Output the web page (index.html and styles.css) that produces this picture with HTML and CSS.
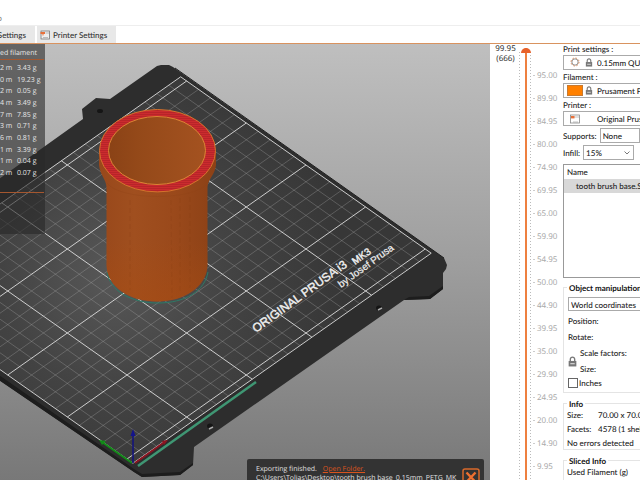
FILE: index.html
```
<!DOCTYPE html>
<html lang="en">
<head>
<meta charset="utf-8">
<title>PrusaSlicer</title>
<link rel="stylesheet" href="styles.css">
</head>
<body>
<header class="menubar"><span>p</span></header>
<nav class="tabs">
  <button class="tab tab-cut" type="button">Settings</button>
  <button class="tab" type="button">
    <svg class="icon" viewBox="0 0 10 10" aria-hidden="true"><rect x="1" y="1" width="8.5" height="8" fill="#eee" stroke="#777" stroke-width=".8"/><path d="M5.500 3H9M3 7.500H8" stroke="#999" stroke-width=".6"/><path d="M.5 2H5V4H3.500V5.500H2.500V4H.5Z" fill="#e8703a"/></svg>
    Printer Settings
  </button>
</nav>
<main class="workspace">
  <section class="viewport">
    <svg class="scene" viewBox="0 44 490 436" preserveAspectRatio="xMinYMin slice" role="img" aria-label="Sliced model on print bed">
      <defs>
        <linearGradient id="sky" x1="0" y1="0" x2="0" y2="1"><stop offset="0" stop-color="#bfbfbf"/><stop offset=".5" stop-color="#9e9e9e"/><stop offset="1" stop-color="#787878"/></linearGradient>
        <radialGradient id="sheet" gradientUnits="userSpaceOnUse" cx="115" cy="275" r="230"><stop offset="0" stop-color="#585858"/><stop offset=".5" stop-color="#434343"/><stop offset="1" stop-color="#373737"/></radialGradient>
        <linearGradient id="body" x1="0" y1="0" x2="1" y2="0"><stop offset="0" stop-color="#98481b"/><stop offset=".3" stop-color="#a04f1f"/><stop offset=".65" stop-color="#9a491b"/><stop offset="1" stop-color="#8c4116"/></linearGradient>
        <linearGradient id="glow" x1="0" y1="0" x2="0" y2="1"><stop offset=".6" stop-color="#a84c12" stop-opacity="0"/><stop offset="1" stop-color="#a84c12" stop-opacity=".5"/></linearGradient>
        <linearGradient id="bore" x1="0" y1="0" x2="1" y2="0"><stop offset="0" stop-color="#8a4216"/><stop offset=".3" stop-color="#944919"/><stop offset="1" stop-color="#a45220"/></linearGradient>
        <pattern id="fill" width="4" height="2" patternUnits="userSpaceOnUse"><rect width="4" height="2" fill="#cb2b2e"/><rect width="4" height="1" fill="#b82429"/></pattern>
      </defs>
      <rect width="1200" height="1200" fill="url(#sky)" y="44" class="sky"/>
      <path d="M-4 181 83 119 82 109 96 98 110 99 157 66 161 65 169 65 173 67 444 258 447 265 446 269 443 273 443 289 430 299 404 300 194 447 193 465 180 475 142 477 134 472 -4 378Z" fill="#2d2d2d"/>
      <path d="M404 300 430 299 443 289V286L429 296 409 297ZM193 463 180 472 142 474 134 469 -4 373V378L134 472 142 477 180 475 193 465Z" fill="#1d1d1d"/>
      <path d="M133 463 -116 288-65 249 181 77 431 253Z" fill="url(#sheet)"/>
      <g transform="matrix(1.193 -.84 -1.193 -.84 127 459)" fill="none">
        <path class="thin" d="M10-5V205M20-5V205M30-5V205M40-5V205M60-5V205M70-5V205M80-5V205M90-5V205M110-5V205M120-5V205M130-5V205M140-5V205M160-5V205M170-5V205M180-5V205M190-5V205M210-5V205M220-5V205M230-5V205M240-5V205M0 10H250M0 20H250M0 30H250M0 40H250M0 60H250M0 70H250M0 80H250M0 90H250M0 110H250M0 120H250M0 130H250M0 140H250M0 160H250M0 170H250M0 180H250M0 190H250"/>
        <path class="bold" d="M0-5H250V205H0ZM50-5V205M100-5V205M150-5V205M200-5V205M0 0H250M0 50H250M0 100H250M0 150H250M0 200H250"/>
      </g>
      <path d="M175 68 444 258" stroke="#1f1f1f" stroke-width="1"/>
      <g fill="#151515"><ellipse cx="100" cy="111" rx="3" ry="2"/><ellipse cx="379" cy="308" rx="3" ry="2.500"/><ellipse cx="210" cy="426" rx="3" ry="2.500"/></g>
      <path d="M378 310 382 308M209 429 213 427" stroke="#aaa" stroke-width="1.500"/>
      <g class="bed-text" fill="#f0f0f0">
        <text transform="translate(256 333) rotate(-36)" font-size="12">ORIGINAL PRUSA i3</text>
        <text transform="translate(355 265) rotate(-36)" font-size="10">MK3</text>
        <text class="byline" transform="translate(341 288) rotate(-36)" font-size="10">by Josef Prusa</text>
      </g>
      <path d="M138 466 256 382" stroke="#3f9673" stroke-width="2.500"/>
      <path d="M135 463 166 441" stroke="#8c1521" stroke-width="2"/><path d="M162 441 168 440 164 445Z" fill="#8c1521"/>
      <path d="M132 463 102 442" stroke="#128a18" stroke-width="2"/><path d="M99 440 106 441 102 445Z" fill="#128a18"/>
      <path d="M133 463V434" stroke="#14147c" stroke-width="1.600"/><path d="M133 429 135.500 436H130.500Z" fill="#14148c"/>
      <path d="M107 272C110 291 131 303 158 303S205 291 208 272" fill="none" stroke="#2d7a66" stroke-width="1"/>
      <path d="M99 151V165C100 175 106 179 106.500 187V265C107 287 130 301.500 157 301.500S207 287 207.500 265V187C208 179 215 175 216 165V151Z" fill="url(#body)"/>
      <path d="M99 151V165C100 175 106 179 106.500 187V265C107 287 130 301.500 157 301.500S207 287 207.500 265V187C208 179 215 175 216 165V151Z" fill="url(#glow)"/>
      <path d="M107 183C120 201 195 201 208 183" fill="none" stroke="#8f4318" opacity=".3"/>
      <path d="M130 200V290M171 200 172 298M180 198V292M190 197V288" stroke="#853c12" stroke-width=".6" stroke-dasharray="5 3" opacity=".35"/>
      <ellipse cx="157.500" cy="150.700" rx="58" ry="41.200" fill="url(#fill)" stroke="#d3742c"/>
      <ellipse cx="157" cy="150.500" rx="48.500" ry="34" fill="url(#bore)" stroke="#dc8434"/>
    </svg>
    <div class="legend">
      <div class="legend-head">ed filament</div>
      <div class="legend-body">
      <table class="usage">
        <tr><td>2 m</td><td>3.43 g</td></tr>
        <tr><td>0 m</td><td>19.23 g</td></tr>
        <tr><td>2 m</td><td>0.05 g</td></tr>
        <tr><td>4 m</td><td>3.49 g</td></tr>
        <tr><td>7 m</td><td>7.85 g</td></tr>
        <tr><td>3 m</td><td>0.71 g</td></tr>
        <tr><td>6 m</td><td>0.81 g</td></tr>
        <tr><td>1 m</td><td>3.39 g</td></tr>
        <tr><td>1 m</td><td>0.04 g</td></tr>
        <tr><td>2 m</td><td>0.07 g</td></tr>
      </table>
      </div>
    </div>
    <div class="toast">
      <div class="toast-text">
        <div>Exporting finished. <a href="#">Open Folder.</a></div>
        <div>C:\Users\Tolias\Desktop\tooth brush base_0.15mm_PETG_MK</div>
      </div>
      <button class="close" type="button" aria-label="Close"><svg viewBox="0 0 18 18"><rect x="1" y="1" width="16" height="16" rx="2" fill="none" stroke="#d9692b" stroke-width="1.500"/><path d="M4.500 4.500 13.500 14M13.500 4.500 4.500 14" stroke="#ee7030" stroke-width="2.400"/></svg></button>
    </div>
  </section>
  <section class="layers">
    <output class="current" for="layer">99.95<br>(666)</output>
    <div class="rail"><input id="layer" class="slider" type="range" min="1" max="666" value="666" aria-label="Layer"></div>
    <ol class="heights">
      <li>95.00</li><li>89.90</li><li>84.95</li><li>80.00</li><li>74.90</li><li>69.95</li><li>65.00</li><li>59.90</li><li>54.95</li><li>50.00</li><li>44.90</li><li>39.95</li><li>35.00</li><li>29.90</li><li>24.95</li><li>20.00</li><li>14.90</li><li>9.95</li>
    </ol>
  </section>
  <aside class="sidebar">
    <div class="preset">
      <label for="print">Print settings :</label>
      <div class="combo">
        <svg class="combo-icon gear" viewBox="0 0 12 12"><circle cx="6" cy="6" r="3.800" fill="none" stroke="#777" stroke-width="1"/><circle cx="6" cy="6" r="4.800" fill="none" stroke="#d98a5a" stroke-width="1.200" stroke-dasharray="1.900 1.870"/></svg>
        <svg class="combo-icon lock" viewBox="0 0 8 10"><path d="M2 5V3A2 2 0 0 1 6 3V5" fill="none" stroke="#777" stroke-width="1.200"/><rect x=".5" y="4.500" width="7" height="5" fill="#777"/><path d="M2 7H6" stroke="#ddd"/></svg>
        <select id="print"><option>0.15mm QUALITY</option></select>
      </div>
    </div>
    <div class="preset">
      <label for="filament">Filament :</label>
      <div class="combo">
        <span class="combo-icon swatch"></span>
        <svg class="combo-icon lock" viewBox="0 0 8 10"><path d="M2 5V3A2 2 0 0 1 6 3V5" fill="none" stroke="#777" stroke-width="1.200"/><rect x=".5" y="4.500" width="7" height="5" fill="#777"/><path d="M2 7H6" stroke="#ddd"/></svg>
        <select id="filament"><option>Prusament PETG</option></select>
      </div>
    </div>
    <div class="preset">
      <label for="printer">Printer :</label>
      <div class="combo">
        <svg class="combo-icon printer" viewBox="0 0 10 10"><rect x=".5" y="1" width="9" height="8" fill="#fff" stroke="#888" stroke-width=".8"/><path d="M1 3H9M3 8H8" stroke="#999" stroke-width=".6"/><rect x="1" y="2" width="3.500" height="2.400" fill="#e8703a"/></svg>
        <select id="printer"><option>Original Prusa i3</option></select>
      </div>
    </div>
    <div class="field"><label for="supports">Supports:</label><select id="supports" class="box"><option>None</option></select></div>
    <div class="field"><label for="infill">Infill:</label><div class="infill"><select id="infill" class="box"><option>15%</option></select><svg class="arrow" viewBox="0 0 6 4"><path d="M.5.5 3 3 5.500.5" fill="none" stroke="#555" stroke-width=".8"/></svg></div></div>
    <div class="objects"><div class="col-name">Name</div><div class="object">tooth brush base.STL</div></div>
    <section class="group manip">
      <h2>Object manipulation</h2>
      <select class="box world" aria-label="Coordinates"><option>World coordinates</option></select>
      <div class="row">Position:</div>
      <div class="row">Rotate:</div>
      <div class="scale">
        <svg class="lock-big" viewBox="0 0 8 10"><path d="M2 5V3A2 2 0 0 1 6 3V5" fill="none" stroke="#777" stroke-width="1.200"/><rect x=".5" y="4.500" width="7" height="5" fill="#777"/><path d="M2 7H6" stroke="#ddd"/></svg>
        <div><div class="row">Scale factors:</div><div class="row">Size:</div></div>
      </div>
      <label class="inches"><input type="checkbox">Inches</label>
    </section>
    <section class="group info">
      <h2>Info</h2>
      <dl><dt>Size:</dt><dd>70.00 x 70.00</dd><dt>Facets:</dt><dd>4578 (1 shell)</dd></dl>
      <div class="status">No errors detected</div>
    </section>
    <section class="group sliced">
      <h2>Sliced Info</h2>
      <div>Used Filament (g)</div>
      <div class="sub">(including spool)</div>
    </section>
  </aside>
</main>
</body>
</html>
```
FILE: styles.css
```
* { box-sizing: border-box; }
body {
  margin: 0;
  height: 100vh;
  display: flex;
  flex-direction: column;
  overflow: hidden;
  background: #fff;
  color: #333;
  font: 8px/14px "Noto Sans", "Open Sans", sans-serif;
  text-rendering: geometricPrecision;
  white-space: nowrap;
}
button, select, input { font: inherit; color: inherit; margin: 0; text-rendering: inherit; }
button { border: 0; padding: 0; background: none; }

.menubar { height: 26px; padding-top: 12px; line-height: 14px; overflow: hidden; border-bottom: 1px solid #eee; }
.menubar span { margin-left: -3px; color: #777; }
.tabs { display: flex; gap: 2px; height: 18px; border-bottom: 1px solid #d9935f; }
.tab { display: flex; align-items: center; gap: 3px; padding: 0 9px 0 3px; height: 17px; background: #e8e8e8; font: 500 8px/14px Lato, "Open Sans", sans-serif; }
.tab-cut { padding-left: 0; width: 35px; justify-content: flex-end; overflow: hidden; }
.icon { width: 10px; height: 10px; }

.workspace { flex: 1; min-height: 0; display: flex; }
.viewport { flex: 1; min-width: 0; position: relative; overflow: hidden; background: #787878; }
.scene { display: block; width: 100%; height: 100%; }
.sky { height: 436px; }
.thin { stroke: #aaa; stroke-opacity: .32; stroke-width: 1px; vector-effect: non-scaling-stroke; }
.bold { stroke: #ddd; stroke-opacity: .9; stroke-width: 1px; vector-effect: non-scaling-stroke; }
.bed-text { font-family: "Liberation Sans", sans-serif; stroke: #f0f0f0; stroke-width: .4px; }
.byline { stroke-width: .2px; }

.legend { position: absolute; left: 0; top: 0; width: 45px; height: 190px; background: rgba(40, 40, 40, .6); color: #e4e4e4; font: 7px/11px "Open Sans", sans-serif; }
.legend-head { height: 16px; line-height: 20px; margin-right: 1px; border-bottom: 1px solid #a5572f; }
.legend-body { height: 133px; padding-top: 3px; margin-right: 1px; border-bottom: 1px solid #a5572f; }
.usage { border-collapse: collapse; width: 44px; height: 117px; }
.usage td { padding: 0; line-height: 10px; }
.usage td:first-child { width: 17px; }

.toast { position: absolute; right: 6px; bottom: -8px; width: 237px; height: 29px; padding: 6px 4px 0 9px; display: flex; justify-content: space-between; background: #333; border-radius: 2px; color: #e0e0e0; font: 7px/9px "Open Sans", sans-serif; }
.toast a { color: #d9541e; margin-left: 4px; }
.close { width: 18px; height: 18px; margin-top: 3px; }
.close svg { display: block; }

.layers { width: 73px; display: flex; overflow: hidden; }
.current { width: 28px; line-height: 10px; text-align: center; padding: 0 0 0 3px; }
.rail { width: 15px; padding-top: 4px; display: flex; justify-content: center; background: repeating-linear-gradient(#bbb 0 1px, transparent 1px 3px) 1px 8px / 1px 100% no-repeat, repeating-linear-gradient(#bbb 0 1px, transparent 1px 3px) 12px 8px / 1px 100% no-repeat; }
.slider { appearance: none; writing-mode: vertical-lr; direction: rtl; width: 10px; height: 100%; background: linear-gradient(90deg, transparent 4px, #ee8040 4px 6px, transparent 6px); }
.slider::-webkit-slider-thumb { appearance: none; width: 10px; height: 5px; border-radius: 5px 5px 0 0; background: #e8622a; }
.heights { list-style: none; margin: 0; padding: 20px 0 0; color: #aaa; line-height: 23px; }
.heights li { display: flex; align-items: center; gap: 2px; }
.heights li::before { content: ""; width: 2px; height: 1px; background: #ccc; }

.sidebar { width: 77px; overflow: hidden; color: #222; font: 500 8px/14px Lato, "Open Sans", sans-serif; }
.preset label { display: block; height: 11px; line-height: 11px; }
.preset { margin-bottom: 2px; }
.combo { position: relative; display: flex; }
.combo select { appearance: none; width: 190px; height: 15px; padding: 0 0 0 33px; border: 1px solid #aaa; border-radius: 0; background: #fff; }
.combo-icon { position: absolute; top: 3px; }
.gear { left: 7px; top: 2px; width: 10px; height: 10px; }
.lock { left: 22px; width: 8px; height: 9px; }
.swatch { left: 4px; top: 2px; width: 16px; height: 11px; background: #ff8000; border: 1px solid #c87a30; }
.printer { left: 7px; width: 10px; height: 10px; }
.box { appearance: none; height: 15px; padding: 0 2px; border: 1px solid #aaa; border-radius: 0; background: #fff; }
.field { display: flex; align-items: center; gap: 3px; margin-top: 2px; height: 15px; }
.field #supports { width: 150px; }
.infill { position: relative; display: flex; }
.infill .box { width: 51px; }
.arrow { position: absolute; right: 4px; top: 6px; width: 6px; height: 4px; }
.objects { width: 190px; height: 114px; margin-top: 4px; border: 1px solid #999; }
.col-name { padding-left: 3px; height: 14px; }
.object { padding-left: 12px; height: 14px; line-height: 14px; background: #d8d8d8; }
.group { position: relative; width: 190px; border: 1px solid #e4e4e4; padding-left: 4px; }
.group h2 { position: absolute; top: -7px; left: 3px; margin: 0; padding: 0 2px; font-size: 8px; line-height: 14px; background: #fff; color: #111; }
.manip { margin-top: 9px; height: 106px; padding-top: 9px; }
.world { display: block; width: 150px; height: 14px; margin-bottom: 2px; }
.row { height: 16px; line-height: 16px; }
.scale { display: flex; align-items: center; gap: 3px; }
.lock-big { width: 9px; height: 11px; }
.inches { display: flex; align-items: center; gap: 1px; height: 12px; }
.inches input { appearance: none; width: 10px; height: 10px; border: 1px solid #666; background: #fff; }
.info { margin-top: 10px; height: 47px; padding: 4px 0 0 3px; }
.info dl { display: grid; grid-template-columns: 31px 1fr; margin: 0; }
.info dd { margin: 0; }
.sliced { margin-top: 10px; height: 60px; padding: 5px 0 0 3px; line-height: 12px; }
.sub { padding-left: 14px; }
```
